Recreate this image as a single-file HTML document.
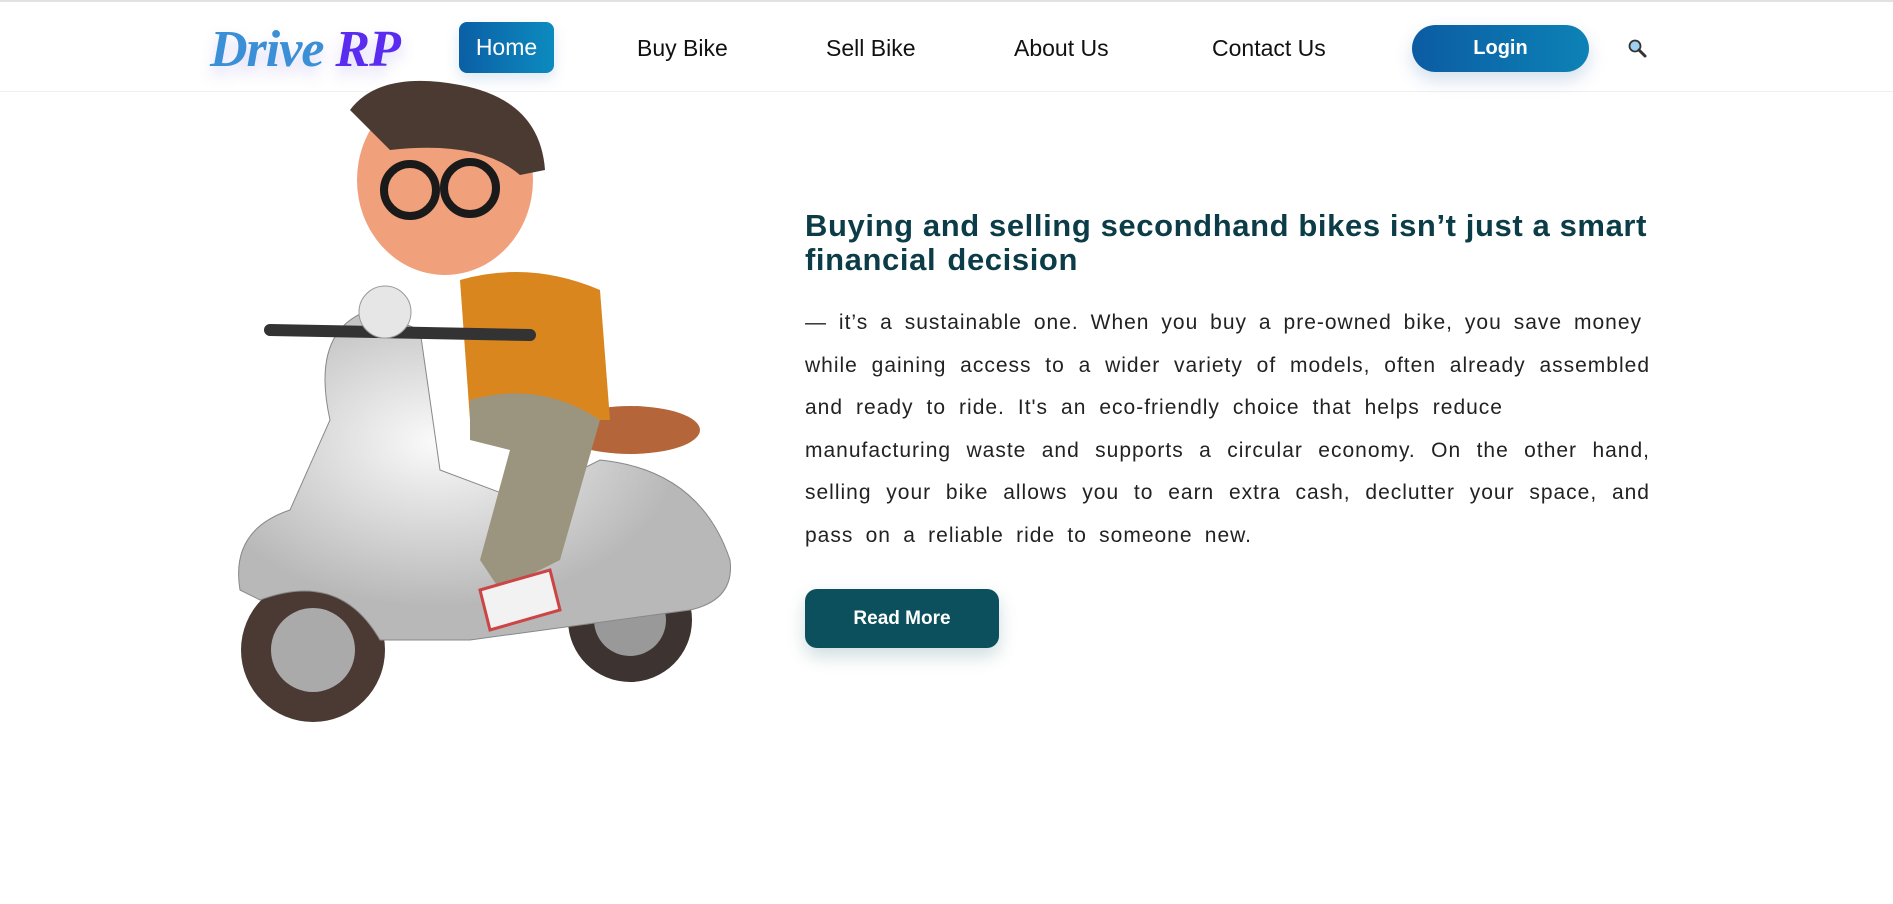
<!DOCTYPE html>
<html><head><meta charset="utf-8"><style>
*{margin:0;padding:0;box-sizing:border-box}
body{width:1893px;height:904px;background:#fff;font-family:"Liberation Sans",sans-serif;position:relative;overflow:hidden}
.top{position:absolute;left:0;top:0;width:1893px;height:2px;background:#e2e2e2}
.nav{position:absolute;left:0;top:2px;width:1893px;height:90px;border-bottom:1px solid #eef0f2}
.logo{position:absolute;left:210px;top:18px;font:italic bold 52px "Liberation Serif",serif;letter-spacing:-1px;text-shadow:0 8px 14px rgba(120,100,220,.25)}
.logo .a{color:#3a8fd6}.logo .b{color:#5a2cf0}
.home{position:absolute;left:459px;top:20px;width:95px;height:51px;border-radius:8px;background:linear-gradient(90deg,#0b5fa5,#0c8bbf);color:#fff;font-size:23px;line-height:51px;text-align:center;box-shadow:0 6px 14px rgba(12,100,170,.15)}
.nl{position:absolute;top:33px;font-size:23px;color:#111}
.login{position:absolute;left:1412px;top:23px;width:177px;height:47px;border-radius:24px;background:linear-gradient(90deg,#0b5ca3,#0d82b6);color:#fff;font-weight:bold;font-size:20px;line-height:47px;text-align:center;box-shadow:0 8px 18px rgba(12,80,150,.18)}
h2{position:absolute;left:805px;top:209px;font-size:31px;line-height:34px;color:#0b3c47;font-weight:bold;letter-spacing:.6px}
h2 div,.p div{text-align:justify;text-align-last:justify;white-space:nowrap;overflow:visible}
.p{position:absolute;left:805px;top:302px;font-size:21px;line-height:42.5px;color:#222;letter-spacing:1px}
.rm{position:absolute;left:805px;top:589px;width:194px;height:59px;border-radius:12px;background:#0b505c;color:#fff;font-weight:bold;font-size:19px;line-height:59px;text-align:center;box-shadow:0 8px 18px rgba(11,80,92,.2)}
</style></head><body>
<div class="top"></div>
<div class="nav">
<div class="logo"><span class="a">Drive</span> <span class="b">RP</span></div>
<div class="home">Home</div>
<div class="nl" style="left:637px">Buy Bike</div>
<div class="nl" style="left:826px">Sell Bike</div>
<div class="nl" style="left:1014px">About Us</div>
<div class="nl" style="left:1212px">Contact Us</div>
<div class="login">Login</div>
<svg style="position:absolute;left:1628px;top:37px" width="20" height="20" viewBox="0 0 20 20"><circle cx="7" cy="7" r="5.5" fill="#9fd0f0" stroke="#333" stroke-width="1.8"/><path d="M11 11l6 6" stroke="#333" stroke-width="3" stroke-linecap="round"/></svg>
</div>
<svg style="position:absolute;left:0;top:0" width="1893" height="904" viewBox="0 0 1893 904">
<defs><radialGradient id="g" cx=".4" cy=".4"><stop offset="0" stop-color="#fafafa"/><stop offset="1" stop-color="#b8b8b8"/></radialGradient></defs>
<circle cx="313" cy="650" r="72" fill="#4a3a33"/><circle cx="313" cy="650" r="42" fill="#aaa"/>
<circle cx="630" cy="620" r="62" fill="#3d3330"/><circle cx="630" cy="620" r="36" fill="#999"/>
<path d="M240 590 Q230 530 290 510 L330 420 Q310 330 370 310 L420 330 L440 470 L520 500 L600 460 Q700 470 730 560 Q735 600 690 610 L470 640 L380 640 Q340 570 260 600Z" fill="url(#g)" stroke="#888"/>
<ellipse cx="630" cy="430" rx="70" ry="24" fill="#b5653a"/>
<path d="M460 280 Q530 260 600 290 L610 420 L470 420Z" fill="#d9861e"/>
<path d="M470 400 Q540 380 600 420 L560 560 L500 590 L480 560 L510 450 L470 440Z" fill="#9b9580"/>
<path d="M480 590 L550 570 L560 610 L490 630Z" fill="#f2f2f2" stroke="#c44" stroke-width="3"/>
<path d="M270 330 L530 335" stroke="#333" stroke-width="12" stroke-linecap="round"/>
<circle cx="385" cy="312" r="26" fill="#e6e6e6" stroke="#999"/>
<ellipse cx="445" cy="180" rx="88" ry="95" fill="#f0a07a"/>
<path d="M350 110 Q380 70 460 85 Q540 100 545 170 L520 175 Q480 140 390 150Z" fill="#4b3a32"/>
<circle cx="410" cy="190" r="26" fill="none" stroke="#1a1a1a" stroke-width="8"/>
<circle cx="470" cy="188" r="26" fill="none" stroke="#1a1a1a" stroke-width="8"/>
</svg>
<h2><div style="width:839px">Buying and selling secondhand bikes isn’t just a smart</div><div style="width:273px">financial decision</div></h2>
<div class="p">
<div style="width:837px">— it’s a sustainable one. When you buy a pre-owned bike, you save money</div>
<div style="width:845px">while gaining access to a wider variety of models, often already assembled</div>
<div style="width:698px">and ready to ride. It's an eco-friendly choice that helps reduce</div>
<div style="width:845px">manufacturing waste and supports a circular economy. On the other hand,</div>
<div style="width:845px">selling your bike allows you to earn extra cash, declutter your space, and</div>
<div style="width:447px">pass on a reliable ride to someone new.</div>
</div>
<div class="rm">Read More</div>
</body></html>
